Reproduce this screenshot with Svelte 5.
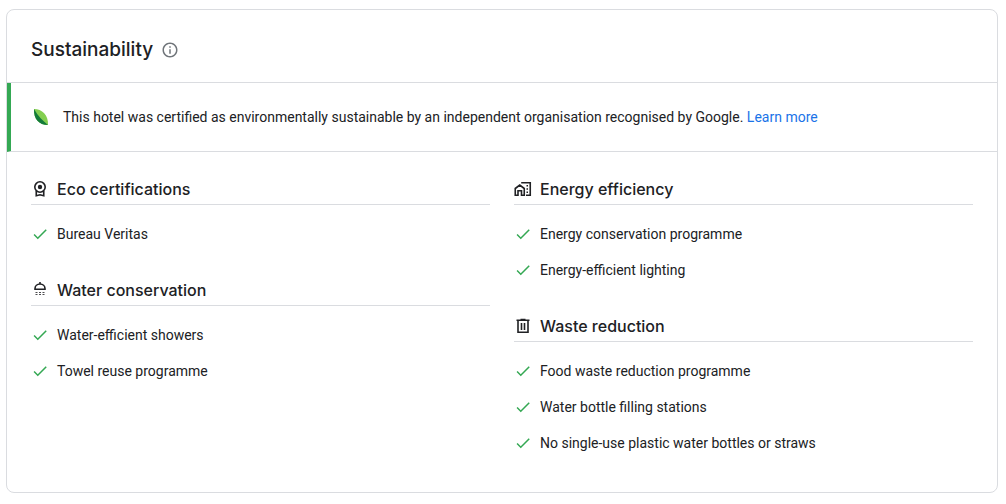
<script>
  const columns = [
    [
      { title: 'Eco certifications', icon: 'award', items: ['Bureau Veritas'] },
      { title: 'Water conservation', icon: 'shower', items: ['Water-efficient showers', 'Towel reuse programme'] }
    ],
    [
      { title: 'Energy efficiency', icon: 'home', items: ['Energy conservation programme', 'Energy-efficient lighting'] },
      {
        title: 'Waste reduction',
        icon: 'bin',
        items: ['Food waste reduction programme', 'Water bottle filling stations', 'No single-use plastic water bottles or straws']
      }
    ]
  ];
</script>

<section class="card">
  <header>
    <h2>Sustainability</h2>
    <button type="button" aria-label="About sustainability">
      <svg width="18" height="18" viewBox="0 0 24 24" fill="currentColor"><path d="M11 7h2v2h-2zm0 4h2v6h-2zm1-9C6.480 2 2 6.480 2 12s4.480 10 10 10 10-4.480 10-10S17.520 2 12 2zm0 18c-4.410 0-8-3.590-8-8s3.590-8 8-8 8 3.590 8 8-3.590 8-8 8z" /></svg>
    </button>
  </header>

  <div class="banner">
    <svg width="20" height="20" viewBox="0 0 20 20" aria-hidden="true">
      <path fill="#84cf50" d="M3 2C11 2 17.500 8 17 18C8 18 2.500 12 3 2z" />
      <path fill="#137b3a" d="M3 2C2.500 12 8 18 17 18C12 14 7 9 3 2z" />
    </svg>
    <p>This hotel was certified as environmentally sustainable by an independent organisation recognised by Google. <a href="#learn">Learn more</a></p>
  </div>

  <div class="columns">
    {#each columns as groups}
      <div class="column">
        {#each groups as group}
          <section>
            <h3>
              <svg width="18" height="18" viewBox="0 0 18 18" fill="none" stroke="currentColor" stroke-width="1.600" aria-hidden="true">
                {#if group.icon === 'award'}
                  <circle cx="9" cy="7" r="5.200" />
                  <circle cx="9" cy="7" r="2.200" fill="currentColor" stroke="none" />
                  <path d="M5.250 11v4.750L9 14.750l3.750 1V11" />
                {:else if group.icon === 'shower'}
                  <path d="M4 8.250h10V7.500a5 4.500 0 0 0-10 0zM9 1v2.500" />
                  <path d="M4.500 11.500h2m1.500 0h2m1.500 0h2M4.500 13.500h2m1.500 0h2m1.500 0h2" stroke-width="1" opacity=".8" />
                {:else if group.icon === 'home'}
                  <path d="M1.250 15.250V8.500L5.750 5l4.500 3.500v6.750H7.500v-4.500H4v4.500z" />
                  <path d="M8 3.500v-.750h8.250v12.500H12" />
                  <path d="M12.500 5.750H14M12.500 9H14M12.500 12.250H14" />
                {:else}
                  <path d="M4 4v11.250h10V4M2.500 3.250h13M6.500 2.500h5M7.500 6v7M10.500 6v7" />
                {/if}
              </svg>
              {group.title}
            </h3>
            <ul>
              {#each group.items as item}
                <li>
                  <svg width="18" height="18" viewBox="0 0 24 24" fill="#34a853" aria-hidden="true"><path d="M9 16.170L4.830 12l-1.420 1.410L9 19 21 7l-1.410-1.410z" /></svg>
                  {item}
                </li>
              {/each}
            </ul>
          </section>
        {/each}
      </div>
    {/each}
  </div>
</section>

<style>
  :global(body) {
    background: #fff;
  }
  .card {
    margin: 9px 8px 11px 6px;
    border: 1px solid #dadce0;
    border-radius: 8px;
    overflow: hidden;
    color: #202124;
    font: 14px/20px Roboto, sans-serif;
  }
  header {
    display: flex;
    align-items: center;
    gap: 8px;
    padding: 28px 24px 20px;
    border-bottom: 1px solid #dadce0;
  }
  h2,
  h3,
  p,
  ul {
    margin: 0;
    padding: 0;
  }
  h2 {
    font: 500 19px/24px Inter, sans-serif;
  }
  button {
    display: flex;
    padding: 0;
    border: 0;
    background: none;
    color: #70757a;
  }
  svg {
    flex: none;
  }
  .banner {
    display: flex;
    align-items: center;
    gap: 12px;
    padding: 24px 24px 24px 20px;
    border-left: 4px solid #34a853;
    border-bottom: 1px solid #dadce0;
  }
  a {
    color: #1a73e8;
    text-decoration: none;
  }
  .columns {
    display: grid;
    grid-template-columns: 1fr 1fr;
    gap: 24px;
    padding: 25px 24px 31px;
  }
  .column {
    display: flex;
    flex-direction: column;
    gap: 26px;
  }
  h3 {
    display: flex;
    align-items: center;
    gap: 8px;
    padding-bottom: 3px;
    border-bottom: 1px solid #dadce0;
    font: 500 16px/24px Inter, sans-serif;
  }
  ul {
    padding-top: 11px;
    list-style: none;
  }
  li {
    display: flex;
    align-items: center;
    gap: 8px;
    min-height: 36px;
  }
</style>
